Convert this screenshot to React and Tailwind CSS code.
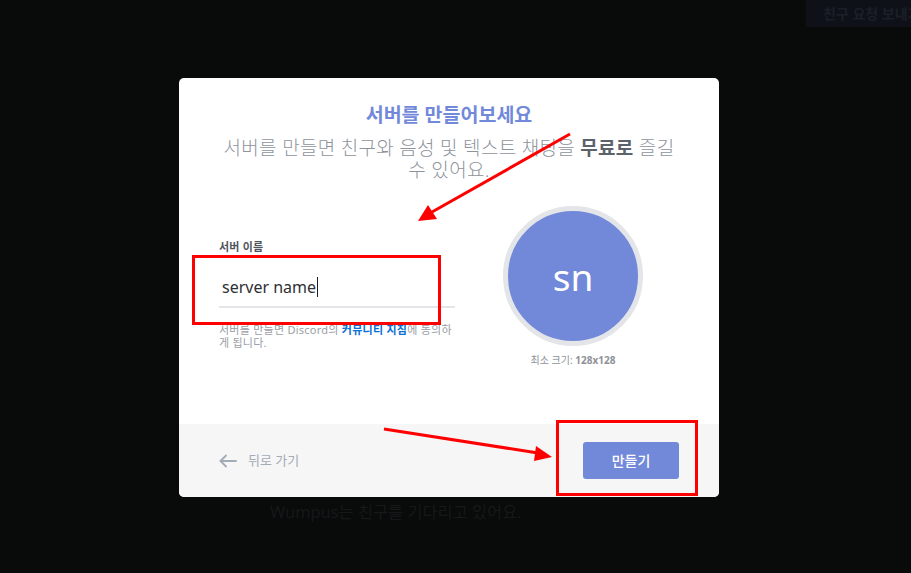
import React from "react";

const font = { fontFamily: '"Noto Sans", "Noto Sans CJK KR", sans-serif' };

function ArrowLeftIcon() {
  return (
    <svg width="18" height="14" viewBox="0 0 18 14" fill="none" stroke="#a3acb6" strokeWidth="1.8" strokeLinecap="round" strokeLinejoin="round">
      <path d="M17 7H1.5" />
      <path d="M7 1.5L1.5 7L7 12.5" />
    </svg>
  );
}

export default function App() {
  return (
    <div
      className="relative w-[911px] h-[573px] overflow-hidden bg-[#090a0a] font-['Noto_Sans','Noto_Sans_CJK_KR',sans-serif]"
      style={font}
    >
      {/* background top bar */}
      <div className="flex h-[27px] justify-end">
        <div className="flex h-[27px] w-[105px] items-center overflow-hidden whitespace-nowrap bg-[#0e1118] pl-[17px] text-[14px] font-bold text-[#1c1f27]">
          친구 요청 보내기
        </div>
      </div>

      {/* modal */}
      <div className="ml-[179px] mt-[51px] flex h-[419px] w-[540px] flex-col overflow-hidden rounded-[5px] bg-white">
        <div className="flex flex-1 flex-col">
          <div className="pt-[24px] text-center text-[19.5px] font-bold leading-[26px] text-[#7289da]">
            서버를 만들어보세요
          </div>
          <div className="mt-[9px] whitespace-nowrap text-center text-[19px] font-light leading-[22px] tracking-[0.3px] text-[#8e949c]">
            서버를 만들면 친구와 음성 및 텍스트 채팅을 <span className="font-bold text-[#5c6269]">무료로</span> 즐길
            <br />
            수 있어요.
          </div>
          <div className="mt-[25px] flex px-[40px]">
            <div className="w-[236px] pt-[34px]">
              <div className="text-[11px] font-bold leading-[14px] tracking-[0.2px] text-[#4f545c]">서버 이름</div>
              <div className="mt-[14px] flex h-[40px] items-center border-b-2 border-[#e3e5e8] pl-[3px] text-[16px] text-[#2e3033]">
                server name<span className="ml-[1px] inline-block h-[20px] w-[1px] bg-[#1e1e1e]" />
              </div>
              <div className="mt-[15px] break-all text-[11px] leading-[13px] tracking-[0.25px] text-[#9a9ea6]">
                서버를 만들면 Discord의 <span className="font-bold text-[#0b6fd6]">커뮤니티 지침</span>에 동의하게 됩니다.
              </div>
            </div>
            <div className="ml-[48px] flex flex-col items-center">
              <div className="flex h-[140px] w-[140px] items-center justify-center rounded-full border-[5px] border-[#e4e5e8] bg-[#7289da]">
                <span className="text-[37px] leading-none text-white">sn</span>
              </div>
              <div className="mt-[7px] text-[10px] leading-[14px] text-[#8e9297]">
                최소 크기: <span className="font-bold">128x128</span>
              </div>
            </div>
          </div>
        </div>
        <div className="flex h-[73px] items-center justify-between bg-[#f6f6f6] px-[40px]">
          <div className="flex items-center gap-[11px] text-[13px] text-[#a3acb6]">
            <ArrowLeftIcon />
            <span>뒤로 가기</span>
          </div>
          <div className="flex h-[37px] w-[96px] items-center justify-center rounded-[3px] bg-[#7289da] text-[14px] font-medium text-white">
            만들기
          </div>
        </div>
      </div>

      <div className="ml-[270px] mt-[4px] text-[16.4px] leading-[22px] text-[#161819]">
        Wumpus는 친구를 기다리고 있어요.
      </div>

      {/* red annotations overlay */}
      <svg className="pointer-events-none absolute inset-0" width="911" height="573" viewBox="0 0 911 573">
        <rect x="193.5" y="256.5" width="246" height="67" fill="none" stroke="#ff0000" strokeWidth="3" />
        <rect x="557.5" y="421.5" width="139" height="73" fill="none" stroke="#ff0000" strokeWidth="3" />
        <line x1="570" y1="134" x2="432" y2="212" stroke="#ff0000" strokeWidth="3" />
        <polygon points="418,221 428,205 437,219" fill="#ff0000" />
        <line x1="384" y1="429" x2="538" y2="453" stroke="#ff0000" strokeWidth="3" />
        <polygon points="552,457 536,446 534,461" fill="#ff0000" />
      </svg>
    </div>
  );
}
